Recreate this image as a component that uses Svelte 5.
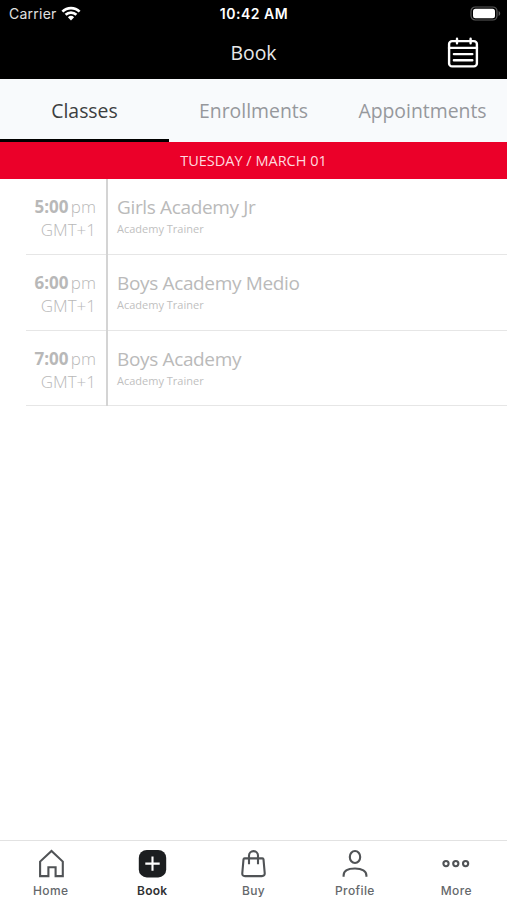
<script>
  const tabs = ['Classes', 'Enrollments', 'Appointments'];
  const classes = [
    { time: '5:00', name: 'Girls Academy Jr', trainer: 'Academy Trainer' },
    { time: '6:00', name: 'Boys Academy Medio', trainer: 'Academy Trainer' },
    { time: '7:00', name: 'Boys Academy', trainer: 'Academy Trainer' }
  ];
  const nav = ['Home', 'Book', 'Buy', 'Profile', 'More'];

  let activeTab = $state('Classes');
  let activeNav = $state('Book');
</script>

<div class="screen">
  <header>
    <div class="status">
      <div class="carrier">
        <span>Carrier</span>
        <svg class="wifi" viewBox="0 0 20 15" width="20" height="15">
          <path d="M1.4 5.6a12.3 12.3 0 0 1 17.2 0" />
          <path d="M4.6 8.8a7.8 7.8 0 0 1 10.8 0" />
          <path class="dot" d="M6.9 11.2a4.6 4.6 0 0 1 6.2 0L10 14.4z" />
        </svg>
      </div>
      <span class="clock">10:42 AM</span>
      <svg class="battery" viewBox="0 0 31 16" width="31" height="16">
        <rect x="1" y="1" width="26" height="13" rx="4.2" fill="none" stroke="#5a5a5a" stroke-width="1.2" />
        <rect x="3" y="2.8" width="22" height="9.4" rx="2.5" fill="#fff" />
        <path d="M28.6 5v5c1-.4 1.6-1.3 1.6-2.5s-.6-2.1-1.6-2.5z" fill="#5a5a5a" />
      </svg>
    </div>
    <div class="title">
      <h1>Book</h1>
      <button class="calendar" aria-label="Calendar">
        <svg viewBox="0 0 32 32" width="32" height="32">
          <rect x="2.1" y="4.1" width="27.8" height="25.3" rx="3" />
          <path d="M2 10.9h28M10 1.8v4.4M23.6 1.8v4.4M6.9 17.1h18.4M6.9 23.3h18.4" />
        </svg>
      </button>
    </div>
  </header>

  <div class="tabs">
    {#each tabs as tab}
      <button class:active={activeTab == tab} onclick={() => (activeTab = tab)}>{tab}</button>
    {/each}
  </div>

  <div class="date"><span>TUESDAY / MARCH 01</span></div>

  <main>
    {#each classes as item}
      <div class="row">
        <div class="when">
          <div class="time"><b>{item.time}</b> <span>pm</span></div>
          <div class="zone">GMT+1</div>
        </div>
        <div class="info">
          <div class="name">{item.name}</div>
          <div class="trainer">{item.trainer}</div>
        </div>
      </div>
    {/each}
  </main>

  <nav>
    {#each nav as label}
      <button class:active={activeNav == label} onclick={() => (activeNav = label)}>
        <svg viewBox="0 0 30 30" width="30" height="30">
          {#if label == 'Home'}
            <path d="M4.1 27.1V12.6L15.5 2l11.3 10.6v14.5h-7.2v-8.8h-7.2v8.8z" />
          {:else if label == 'Book'}
            <rect class="fill" x="1.8" y="1" width="27.4" height="27.4" rx="8" />
            <path class="plus" d="M15.5 7.4v14.4M8.3 14.6h14.4" />
          {:else if label == 'Buy'}
            <path d="M6.6 9.4h17.8q1 0 1.1 1l1.2 13.6q.2 3.1-2.8 3.1H7q-3 0-2.7-3.1l1.2-13.6q.1-1 1.1-1z" />
            <path d="M11 15.2V6.6a4.5 4.5 0 0 1 9 0v8.6" />
          {:else if label == 'Profile'}
            <ellipse cx="15" cy="8" rx="5.2" ry="6" />
            <path d="M3.6 27.7v-1.2c0-4.6 4.2-7 11.4-7s11.4 2.4 11.4 7v1.2" />
          {:else}
            <circle cx="5" cy="14.6" r="2.6" />
            <circle cx="14.8" cy="14.6" r="2.6" />
            <circle cx="24.6" cy="14.6" r="2.6" />
          {/if}
        </svg>
        <span>{label}</span>
      </button>
    {/each}
  </nav>
</div>

<style>
:global(body) {
  background: #fff;
}

.screen {
  height: 900px;
  width: 100%;
  display: flex;
  flex-direction: column;
  overflow: hidden;
  font-family: 'Open Sans', 'Noto Sans', sans-serif;
}

button {
  border: 0;
  padding: 0;
  margin: 0;
  background: none;
  font: inherit;
  cursor: pointer;
}

header {
  height: 79px;
  flex: none;
  background: #000;
  color: #fff;
}

.status {
  height: 27px;
  display: grid;
  grid-template-columns: 1fr auto 1fr;
  align-items: center;
  padding: 0 6px 0 9px;
  font-family: Inter, 'Liberation Sans', sans-serif;
  font-size: 14px;
}

.carrier {
  display: flex;
  align-items: center;
  gap: 4px;
  color: #e0e0e0;
  letter-spacing: 0.25px;
}

.wifi {
  margin-top: -1px;
}

.wifi path {
  fill: none;
  stroke: #fff;
  stroke-width: 2.7;
}

.wifi .dot {
  fill: #fff;
  stroke: none;
}

.clock {
  margin-left: -2px;
  font-weight: 600;
  letter-spacing: 0.5px;
}

.battery {
  justify-self: end;
}

.title {
  height: 52px;
  display: grid;
  grid-template-columns: 1fr auto 1fr;
  align-items: center;
  padding: 0 28px;
}

h1 {
  grid-column: 2;
  margin: 0;
  font-size: 19.4px;
  line-height: 26px;
  font-weight: 400;
  color: #e8e8e8;
}

.calendar {
  justify-self: end;
  display: flex;
}

.calendar svg {
  fill: none;
  stroke: #fff;
  stroke-width: 2.4;
  stroke-linecap: round;
}

.tabs {
  height: 63.4px;
  flex: none;
  display: grid;
  grid-template-columns: repeat(3, 1fr);
  background: #f8fafc;
}

.tabs button {
  border-bottom: 3px solid transparent;
  padding-top: 3px;
  font-size: 19.4px;
  color: #96989c;
}

.tabs .active {
  border-color: #000;
  color: #3c3e40;
}

.date {
  height: 36.6px;
  flex: none;
  display: flex;
  align-items: center;
  justify-content: center;
  background: #eb0029;
  color: #ffd9df;
  font-size: 14.5px;
}

main {
  flex: 1;
}

.row {
  height: 75.8px;
  box-sizing: border-box;
  margin-left: 26px;
  display: flex;
  border-bottom: 1px solid #e6e6e6;
}

.when {
  width: 70px;
  flex: none;
  padding: 16px 10px 0 0;
  border-right: 2px solid #d4d4d4;
  margin-bottom: -1px;
  text-align: right;
  font-size: 17px;
  line-height: 23px;
  font-weight: 300;
  color: #b8b8b8;
  white-space: nowrap;
}

.time {
  word-spacing: -2px;
}

.time b {
  font-weight: 700;
  color: #b8b8b8;
}

.info {
  padding: 15px 0 0 9px;
}

.name {
  font-size: 19px;
  line-height: 26px;
  letter-spacing: -0.35px;
  color: #bababa;
}

.trainer {
  font-size: 11px;
  line-height: 17px;
  color: #bfbfbf;
}

nav {
  height: 60px;
  flex: none;
  box-sizing: border-box;
  display: grid;
  grid-template-columns: repeat(5, 1fr);
  border-top: 1px solid #e2e2e2;
  background: #fff;
  font-family: Inter, 'Liberation Sans', sans-serif;
}

nav button {
  display: flex;
  flex-direction: column;
  align-items: center;
  padding-top: 8px;
  font-size: 12px;
  line-height: 16px;
  font-weight: 500;
  letter-spacing: 0.4px;
  color: #65686b;
}

nav button span {
  margin-top: 4px;
}

nav .active {
  font-weight: 600;
  letter-spacing: 0.2px;
  color: #303234;
}

nav svg {
  fill: none;
  stroke: #505356;
  stroke-width: 2.1;
}

nav .fill {
  fill: #1c1e20;
  stroke: none;
}

nav .plus {
  stroke: #fff;
}
</style>
